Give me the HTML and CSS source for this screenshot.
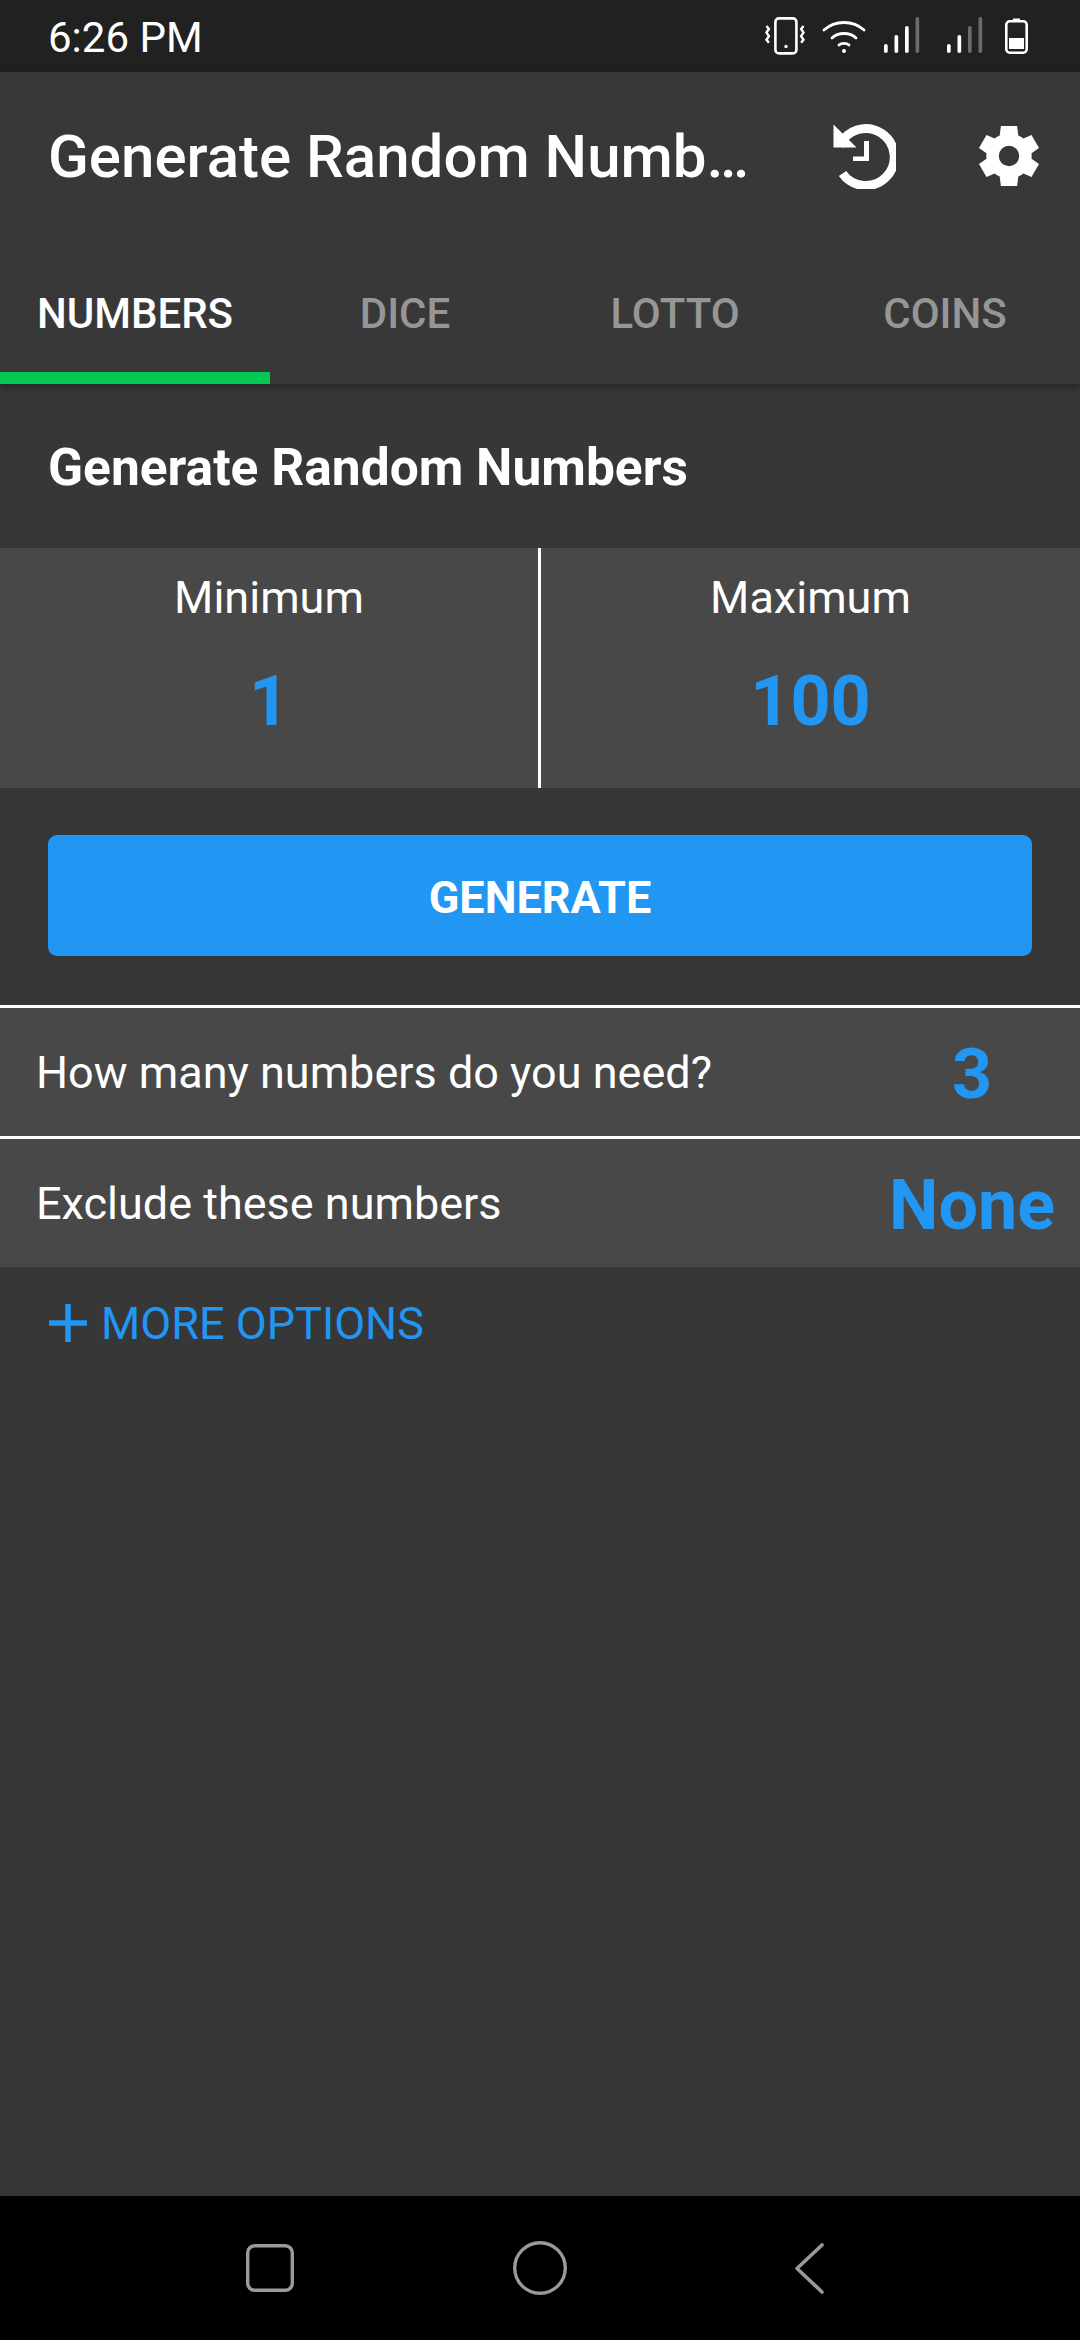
FILE: index.html
```html
<!DOCTYPE html>
<html lang="en">
<head>
<meta charset="utf-8">
<title>Generate Random Numbers</title>
<link rel="stylesheet" href="styles.css">
</head>
<body>
<div class="screen">
  <div class="status">
    <span class="time">6:26 PM</span>
    <div class="status-icons">
      <svg class="ic-vib" width="44" height="40" viewBox="0 0 44 40"><rect x="12.4" y="2.4" width="21" height="35" rx="3.5" fill="none" stroke="#fff" stroke-width="2.6"/><circle cx="23" cy="30.5" r="1.7" fill="#fff"/><path d="M3.5 10l2.4 3-2.4 3.6 2.4 3.6-2.4 3.6 2.4 3" fill="none" stroke="#fff" stroke-width="2.4"/><path d="M40.5 10l-2.4 3 2.4 3.6-2.4 3.6 2.4 3.6-2.4 3" fill="none" stroke="#fff" stroke-width="2.4"/></svg>
      <svg class="ic-wifi" width="44" height="36" viewBox="0 0 44 36"><g fill="none" stroke="#fff" stroke-width="2.8" stroke-linecap="round"><path d="M2 12C13 2 31 2 42 12"/><path d="M10 20C16 14 28 14 34 20"/><path d="M17 27C19.500 24.800 24.500 24.800 27 27"/></g><circle cx="22" cy="33" r="2" fill="#fff"/></svg>
      <svg class="ic-sig" width="37" height="38" viewBox="0 0 37 38"><g fill="#fff"><rect x="0" y="27" width="3.700" height="9" rx="1.800"/><rect x="10.500" y="18" width="3.700" height="18" rx="1.800"/><rect x="21" y="9" width="3.700" height="27" rx="1.800"/></g><rect x="31.500" y="0" width="3.700" height="36" rx="1.800" fill="#6b6b6b"/></svg>
      <svg class="ic-sig" width="37" height="38" viewBox="0 0 37 38"><g fill="#fff"><rect x="0" y="27" width="3.700" height="9" rx="1.800"/><rect x="10.500" y="18" width="3.700" height="18" rx="1.800"/></g><g fill="#6b6b6b"><rect x="21" y="9" width="3.700" height="27" rx="1.800"/><rect x="31.500" y="0" width="3.700" height="36" rx="1.800"/></g></svg>
      <svg class="ic-bat" width="23" height="36" viewBox="0 0 23 36"><rect x="1.300" y="3.300" width="20.400" height="31.400" rx="3.500" fill="none" stroke="#fff" stroke-width="2.600"/><rect x="8" y="0.500" width="7" height="3" fill="#fff"/><rect x="4" y="20" width="15" height="11" fill="#fff"/></svg>
    </div>
  </div>

  <header class="appbar">
    <div class="toolbar">
      <h1 class="title">Generate Random Numbers</h1>
      <div class="actions">
        <svg class="act-hist" width="66" height="66" viewBox="0 0 66 66"><path d="M9.500 23A28.500 28.500 0 1 1 12.500 50.500" fill="none" stroke="#fff" stroke-width="9"/><path d="M3.500 1.500V24.500H26.500Z" fill="#fff"/><path d="M34 18H39V38H23V33.500H34Z" fill="#fff"/></svg>
        <svg class="act-gear" width="72" height="72" viewBox="0 0 24 24"><path fill-rule="evenodd" fill="#fff" d="M9.300 2H14.700L15.100 5.200Q16 5.600 16.800 6.200L19.500 5L22 9.300L19.500 11.100Q19.600 12 19.500 12.900L22 14.700L19.500 19L16.800 17.800Q16 18.400 15.100 18.800L14.700 22H9.300L8.900 18.800Q8 18.400 7.200 17.800L4.500 19L2 14.700L4.500 12.900Q4.400 12 4.500 11.100L2 9.300L4.500 5L7.200 6.200Q8 5.600 8.900 5.200ZM12 8.600A3.400 3.400 0 1 0 12 15.400A3.400 3.400 0 1 0 12 8.600Z"/></svg>
      </div>
    </div>
    <nav class="tabs">
      <div class="tab active">NUMBERS</div>
      <div class="tab">DICE</div>
      <div class="tab">LOTTO</div>
      <div class="tab">COINS</div>
    </nav>
  </header>

  <main class="content">
    <h2 class="heading">Generate Random Numbers</h2>
    <section class="range">
      <div class="range-cell">
        <span class="range-label">Minimum</span>
        <span class="range-value">1</span>
      </div>
      <div class="range-cell">
        <span class="range-label">Maximum</span>
        <span class="range-value">100</span>
      </div>
    </section>
    <div class="button-wrap"><div class="generate">GENERATE</div></div>
    <div class="row">
      <span class="row-label">How many numbers do you need?</span>
      <span class="row-value">3</span>
    </div>
    <div class="row">
      <span class="row-label">Exclude these numbers</span>
      <span class="row-value">None</span>
    </div>
    <div class="more">
      <svg class="more-plus" width="40" height="40" viewBox="0 0 40 40"><path d="M20 1V39M1 20H39" stroke="#2196f3" stroke-width="5.500" fill="none"/></svg>
      <span>MORE OPTIONS</span>
    </div>
  </main>

  <footer class="navbar">
    <svg width="60" height="60" viewBox="0 0 60 60"><rect x="7.700" y="7.700" width="44.600" height="44.600" rx="7" fill="none" stroke="#9a9a9a" stroke-width="3.400"/></svg>
    <svg width="60" height="60" viewBox="0 0 60 60"><circle cx="30" cy="30" r="25.300" fill="none" stroke="#9a9a9a" stroke-width="3.400"/></svg>
    <svg width="60" height="60" viewBox="0 0 60 60"><path d="M42 7L17 30.500L42 54" fill="none" stroke="#9a9a9a" stroke-width="3.600" stroke-linecap="round" stroke-linejoin="round"/></svg>
  </footer>
</div>
</body>
</html>
```

FILE: styles.css
```css
* { box-sizing: border-box; }
html, body { margin: 0; padding: 0; }
body { font-family: Roboto, "Liberation Sans", sans-serif; background: #373737; color: #fff; }
.screen { width: 1080px; height: 2340px; display: flex; flex-direction: column; overflow: hidden; }

.status { height: 72px; flex: none; background: #212121; display: flex; align-items: center; justify-content: space-between; padding: 2px 52px 0 48px; }
.time { font-size: 42px; font-weight: 400; color: #fff; }
.status-icons { display: flex; align-items: center; gap: 15px; margin-top: -2px; }
.ic-sig { margin-left: 3px; }
.ic-sig + .ic-sig { margin-left: 11px; }
.ic-bat { margin-left: 6px; }

.appbar { flex: none; background: #383838; box-shadow: 0 3px 8px rgba(0,0,0,.35); position: relative; }
.toolbar { height: 168px; display: flex; align-items: center; padding-left: 48px; }
.title { margin: 0; width: 705px; font-size: 60px; font-weight: 500; white-space: nowrap; overflow: hidden; text-overflow: ellipsis; }
.actions { flex: 1; display: flex; align-items: center; padding-left: 77px; gap: 77px; }
.tabs { height: 144px; display: grid; grid-template-columns: repeat(4, 270px); }
.tab { display: flex; align-items: center; justify-content: center; font-size: 42px; font-weight: 500; color: #969696; padding-top: 2px; }
.tab.active { color: #fff; border-bottom: 12px solid #00c853; padding-top: 14px; }

.content { flex: 1; display: flex; flex-direction: column; }
.heading { margin: 0; height: 164px; display: flex; align-items: center; padding: 2px 0 0 48px; font-size: 51.5px; font-weight: 700; }
.range { height: 240px; display: grid; grid-template-columns: 538px 1fr; background: #484848; }
.range-cell { display: flex; flex-direction: column; align-items: center; padding-top: 22px; }
.range-cell + .range-cell { border-left: 3px solid #fff; }
.range-label { font-size: 45px; line-height: 56px; }
.range-value { font-size: 70px; font-weight: 700; line-height: 84px; margin-top: 33px; color: #2196f3; }
.button-wrap { padding: 47px 48px 49px; }
.generate { height: 121px; border-radius: 9px; background: #2196f3; display: flex; align-items: center; justify-content: center; font-size: 45px; font-weight: 700; padding-top: 3px; }
.row { height: 131px; border-top: 3px solid #fff; background: #484848; display: flex; align-items: center; padding-left: 36px; }
.row-label { flex: 1; font-size: 45px; }
.row-value { width: 216px; text-align: center; font-size: 70px; font-weight: 700; color: #2196f3; white-space: nowrap; padding-top: 4px; }
.more { display: flex; align-items: center; gap: 13px; padding: 30px 0 0 48px; font-size: 45px; color: #2196f3; }
.more-plus { margin-top: -2px; }

.navbar { height: 144px; flex: none; background: #000; display: flex; align-items: center; justify-content: space-between; padding: 0 240px; }
```
